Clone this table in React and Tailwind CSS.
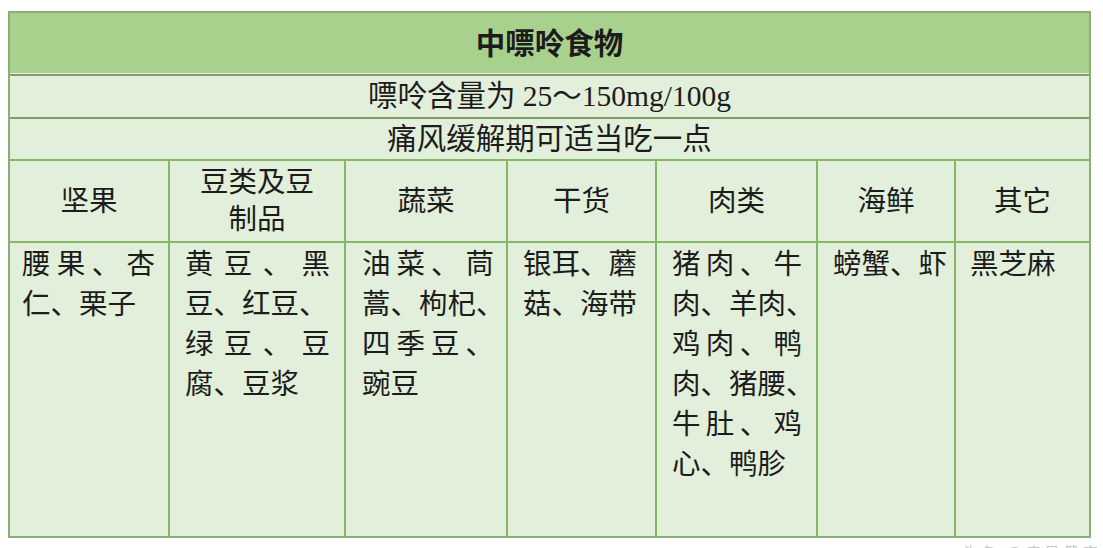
const cols = [
  {
    w: "w-[160px]",
    pad: "pl-[12px] pr-[13px]",
    head: ["坚果"],
    lines: [["腰果、杏", true], ["仁、栗子"]],
  },
  {
    w: "w-[176px]",
    pad: "pl-[15px] pr-[14px]",
    head: ["豆类及豆", "制品"],
    lines: [["黄豆、黑", true], ["豆、红豆、"], ["绿豆、豆", true], ["腐、豆浆"]],
  },
  {
    w: "w-[162px]",
    pad: "pl-[16px] pr-[12px]",
    head: ["蔬菜"],
    lines: [["油菜、茼", true], ["蒿、枸杞、"], ["四季豆、", true], ["豌豆"]],
  },
  {
    w: "w-[149px]",
    pad: "pl-[15px] pr-[14px]",
    head: ["干货"],
    lines: [["银耳、蘑"], ["菇、海带"]],
  },
  {
    w: "w-[161px]",
    pad: "pl-[15px] pr-[14px]",
    head: ["肉类"],
    lines: [
      ["猪肉、牛", true],
      ["肉、羊肉、"],
      ["鸡肉、鸭", true],
      ["肉、猪腰、"],
      ["牛肚、鸡", true],
      ["心、鸭胗"],
    ],
  },
  {
    w: "w-[138px]",
    pad: "pl-[15px] pr-[14px]",
    head: ["海鲜"],
    lines: [["螃蟹、虾"]],
  },
  {
    w: "w-[133px]",
    pad: "pl-[14px] pr-[12px]",
    head: ["其它"],
    lines: [["黑芝麻"]],
  },
];

function Line({ text, justify }) {
  if (justify) {
    return (
      <div className="flex justify-between">
        {[...text].map((c, i) => (
          <span key={i}>{c}</span>
        ))}
      </div>
    );
  }
  return <div className="whitespace-nowrap">{text}</div>;
}

export default function App() {
  return (
    <div className="min-h-screen bg-white pt-[11px] pl-[8px] text-[#1c1c1c] font-['Liberation_Serif','Noto_Sans_CJK_SC',serif]">
      <div className="w-[1083px] border-2 border-[#8cad78] bg-[#e2efda]">
        <div className="h-[63px] flex items-center justify-center bg-[#a9d18e] border-b-2 border-[#7f9c6b] shadow-[inset_0_-1px_0_#e4f0dc] text-[29.5px] font-bold pt-[1px]">
          中嘌呤食物
        </div>
        <div className="h-[43px] flex items-center justify-center border-b-2 border-[#7f9c6b] text-[29.5px]">
          嘌呤含量为 25～150mg/100g
        </div>
        <div className="h-[42px] flex items-center justify-center border-b-2 border-[#86b768] text-[29.5px]">
          痛风缓解期可适当吃一点
        </div>
        <div className="flex h-[82px] border-b-2 border-[#86b768] text-[28.5px]">
          {cols.map((c, i) => (
            <div
              key={i}
              className={`${c.w} shrink-0 flex flex-col items-center justify-center leading-[37px] ${
                i < cols.length - 1 ? "border-r-2 border-[#86b768]" : ""
              }`}
            >
              {c.head.map((h) => (
                <div key={h}>{h}</div>
              ))}
            </div>
          ))}
        </div>
        <div className="flex h-[293px] text-[28.5px] leading-[40px]">
          {cols.map((c, i) => (
            <div
              key={i}
              className={`${c.w} ${c.pad} shrink-0 pt-[2px] ${
                i < cols.length - 1 ? "border-r-2 border-[#86b768]" : ""
              }`}
            >
              {c.lines.map(([t, j]) => (
                <Line key={t} text={t} justify={j} />
              ))}
            </div>
          ))}
        </div>
      </div>
      <div className="flex items-center pl-[876px] pt-[3px] text-[#c4c4c4] text-[15px] font-['Noto_Sans_CJK_SC',sans-serif]">
        <span className="w-[22px] h-[22px] rounded-full border border-[#cfcfcf]"></span>
        <span className="ml-[60px] tracking-[4px]">头条 @痛风健康管家</span>
      </div>
    </div>
  );
}
